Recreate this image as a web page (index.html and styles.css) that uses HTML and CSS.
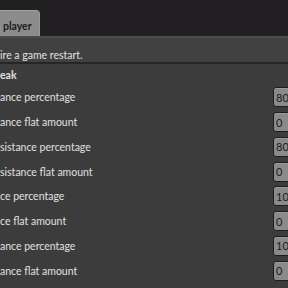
FILE: index.html
```html
<!DOCTYPE html>
<html lang="en">
<head>
    <meta charset="UTF-8">
    <title>Settings</title>
    <link rel="stylesheet" href="styles.css">
</head>
<body>

    <div class="topbar">
        <div class="tab">player</div>
    </div>

    <div class="notice">ire a game restart.</div>

    <div class="section">
        <div class="heading">eak</div>

        <div class="row"><span class="label">ance percentage</span><input class="field" value="80"></div>
        <div class="row"><span class="label">ance flat amount</span><input class="field" value="0"></div>
        <div class="row"><span class="label">sistance percentage</span><input class="field" value="80"></div>
        <div class="row"><span class="label">sistance flat amount</span><input class="field" value="0"></div>
        <div class="row"><span class="label">ce percentage</span><input class="field" value="100"></div>
        <div class="row"><span class="label">ce flat amount</span><input class="field" value="0"></div>
        <div class="row"><span class="label">ance percentage</span><input class="field" value="100"></div>
        <div class="row"><span class="label">ance flat amount</span><input class="field" value="0"></div>
    </div>

</body>
</html>
```

FILE: styles.css
```css
body {
    margin: 0;
    background-color: #3c3c3c;
    font-family: 'Lato', sans-serif;
    font-size: 10.5px;
    color: #e0e0e0;
    overflow: hidden;
}

.topbar {
    height: 36px;
    background-color: #211f21;
    display: flex;
    align-items: flex-end;
}

.tab {
    width: 40px;
    height: 26px;
    box-sizing: border-box;
    padding: 5px 0 0 3px;
    line-height: 21px;
    background-color: #8c8c8c;
    border-top: 1px solid #a2a2a2;
    border-right: 1px solid #9a9a9a;
    border-top-right-radius: 4px;
    color: #1a1a1a;
    font-weight: bold;
    font-size: 10.5px;
}

.notice {
    height: 28px;
    box-sizing: border-box;
    padding-top: 10px;
    line-height: 14px;
    background-color: #414141;
    border-top: 2px solid #4e4a4c;
    border-bottom: 2px solid #262626;
}

.section {
    padding-top: 1px;
}

.heading {
    font-weight: bold;
    height: 20px;
    line-height: 20px;
}

.row {
    display: flex;
    align-items: center;
    height: 24.75px;
}

.label {
    flex: 1;
}

.field {
    width: 40px;
    height: 20px;
    box-sizing: border-box;
    margin-right: -25px;
    padding: 0 2px;
    background-color: #8a8a8a;
    border: 1px solid #1e1e1e;
    border-radius: 3px;
    box-shadow: inset 0 1px 0 #9a9a9a;
    font-family: 'Lato', sans-serif;
    font-size: 11px;
    color: #1a1a1a;
}
```
